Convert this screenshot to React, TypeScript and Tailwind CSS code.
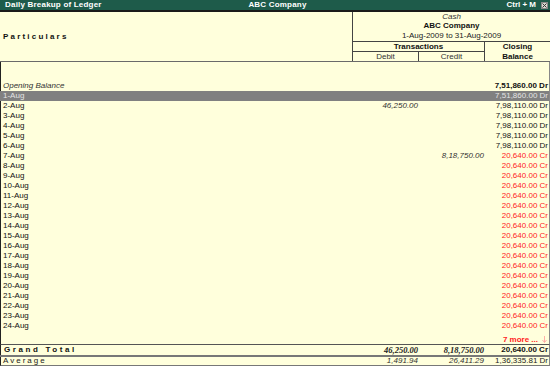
import React from 'react';

interface Row {
    day: string;
    debit?: string;
    credit?: string;
    closing: string;
    cr?: boolean;
}

const rows: Row[] = [];
for (let d = 1; d <= 24; d++) {
    const day = `${d}-Aug`;
    if (d === 1) rows.push({ day, closing: '7,51,860.00 Dr' });
    else if (d === 2) rows.push({ day, debit: '46,250.00', closing: '7,98,110.00 Dr' });
    else if (d < 7) rows.push({ day, closing: '7,98,110.00 Dr' });
    else if (d === 7) rows.push({ day, credit: '8,18,750.00', closing: '20,640.00 Cr', cr: true });
    else rows.push({ day, closing: '20,640.00 Cr', cr: true });
}

export default function App() {
    return (
        <div className="w-[550px] h-[366px] bg-[#ffffdc] flex flex-col overflow-hidden text-[8px] text-[#111] whitespace-nowrap" style={{ fontFamily: '"Liberation Sans", Arial, sans-serif' }}>
            {/* title bar */}
            <div className="h-[10px] bg-[#1e5b4a] flex items-center text-white font-bold text-[8px] leading-[10px]">
                <div className="flex-1 pl-[5px] tracking-[0.2px]">Daily Breakup of Ledger</div>
                <div className="tracking-[0.2px]">ABC Company</div>
                <div className="flex-1 flex justify-end items-center">
                    <span>Ctrl + M</span>
                    <span className="ml-[5px] mr-[2px] w-[7px] h-[7px] bg-[#d8d8d0] border border-[#888] flex items-center justify-center">
                        <svg width="5" height="5" viewBox="0 0 5 5"><path d="M0.5 0.5 L4.5 4.5 M4.5 0.5 L0.5 4.5" stroke="#333" strokeWidth="1" /></svg>
                    </span>
                </div>
            </div>
            <div className="h-[2px] bg-[#1a1a1a]" />

            {/* header */}
            <div className="h-[50px] flex border-b border-[#6a6a6a]">
                <div className="flex-1 flex items-center pl-[3px] font-bold tracking-[2.2px]">Particulars</div>
                <div className="w-[198px] border-l border-[#444] flex flex-col">
                    <div className="h-[30px] border-b border-[#444] flex flex-col items-center">
                        <div className="h-[9px] leading-[10px] italic text-[#333]">Cash</div>
                        <div className="h-[10px] leading-[10px] font-bold">ABC Company</div>
                        <div className="h-[10px] leading-[10px] text-[#222]">1-Aug-2009 to 31-Aug-2009</div>
                    </div>
                    <div className="flex flex-1">
                        <div className="w-[132px] border-r border-[#444] flex flex-col">
                            <div className="h-[10px] leading-[10px] border-b border-[#444] text-center font-bold">Transactions</div>
                            <div className="flex flex-1">
                                <div className="w-[66px] border-r border-[#444] text-center leading-[9px] text-[#333]">Debit</div>
                                <div className="flex-1 text-center leading-[9px] text-[#333]">Credit</div>
                            </div>
                        </div>
                        <div className="flex-1 flex flex-col items-center font-bold">
                            <div className="h-[10px] leading-[10px]">Closing</div>
                            <div className="leading-[9px]">Balance</div>
                        </div>
                    </div>
                </div>
            </div>

            {/* body */}
            <div className="flex-1 flex flex-col border-l border-l-[#222] border-r border-r-[#888]">
                <div className="h-[19px]" />
                <div className="h-[10px] leading-[10px] flex">
                    <div className="flex-1 pl-[2px] italic text-[#333]">Opening Balance</div>
                    <div className="w-[64px] text-right pr-[1px] font-bold">7,51,860.00 Dr</div>
                </div>
                {rows.map((r, i) => (
                    <div key={r.day} className={`h-[10px] leading-[10px] flex ${i === 0 ? 'bg-[#808080] text-[#e4e4e4] -ml-[1px]' : ''}`}>
                        <div className={`flex-1 ${i === 0 ? 'pl-[3px]' : 'pl-[2px]'}`}>{r.day}</div>
                        <div className="w-[66px] text-right pr-[1px] italic text-[#333]">{r.debit}</div>
                        <div className="w-[66px] text-right pr-[1px] italic text-[#333]">{r.credit}</div>
                        <div className={`w-[64px] text-right pr-[1px] ${r.cr ? 'text-[#ff2222]' : ''}`}>{r.closing}</div>
                    </div>
                ))}
                <div className="mt-auto h-[9px] flex items-end justify-end pr-[2px] pb-[0px] font-bold text-[#ff2222] leading-[9px]">
                    <span>7 more ...</span>
                    <svg className="ml-[4px] mb-[1px]" width="5" height="7" viewBox="0 0 5 7">
                        <path d="M2.5 0 V6 M0.5 4 L2.5 6.5 L4.5 4" stroke="#ff9a9a" strokeWidth="0.8" fill="none" />
                    </svg>
                </div>
            </div>

            {/* totals */}
            <div className="h-[11px] border-t border-[#555] border-l border-l-[#222] border-r border-r-[#888] flex leading-[10px]">
                <div className="flex-1 pl-[3px] font-bold tracking-[2.6px]">Grand Total</div>
                <div className="w-[66px] text-right pr-[1px] font-bold italic text-[8.5px] text-[#222]" style={{ fontFamily: '"Liberation Serif", serif' }}>46,250.00</div>
                <div className="w-[66px] text-right pr-[1px] font-bold italic text-[8.5px] text-[#222]" style={{ fontFamily: '"Liberation Serif", serif' }}>8,18,750.00</div>
                <div className="w-[64px] text-right pr-[1px] font-bold">20,640.00 Cr</div>
            </div>
            <div className="h-[2px] bg-[#777]" />
            <div className="h-[9px] border-b border-[#777] border-l border-l-[#222] border-r border-r-[#888] flex leading-[8px] text-[#222]">
                <div className="flex-1 pl-[2px] tracking-[2px]">Average</div>
                <div className="w-[66px] text-right pr-[1px] italic text-[#333]">1,491.94</div>
                <div className="w-[66px] text-right pr-[1px] italic text-[#333]">26,411.29</div>
                <div className="w-[64px] text-right pr-[1px]">1,36,335.81 Dr</div>
            </div>
        </div>
    );
}
